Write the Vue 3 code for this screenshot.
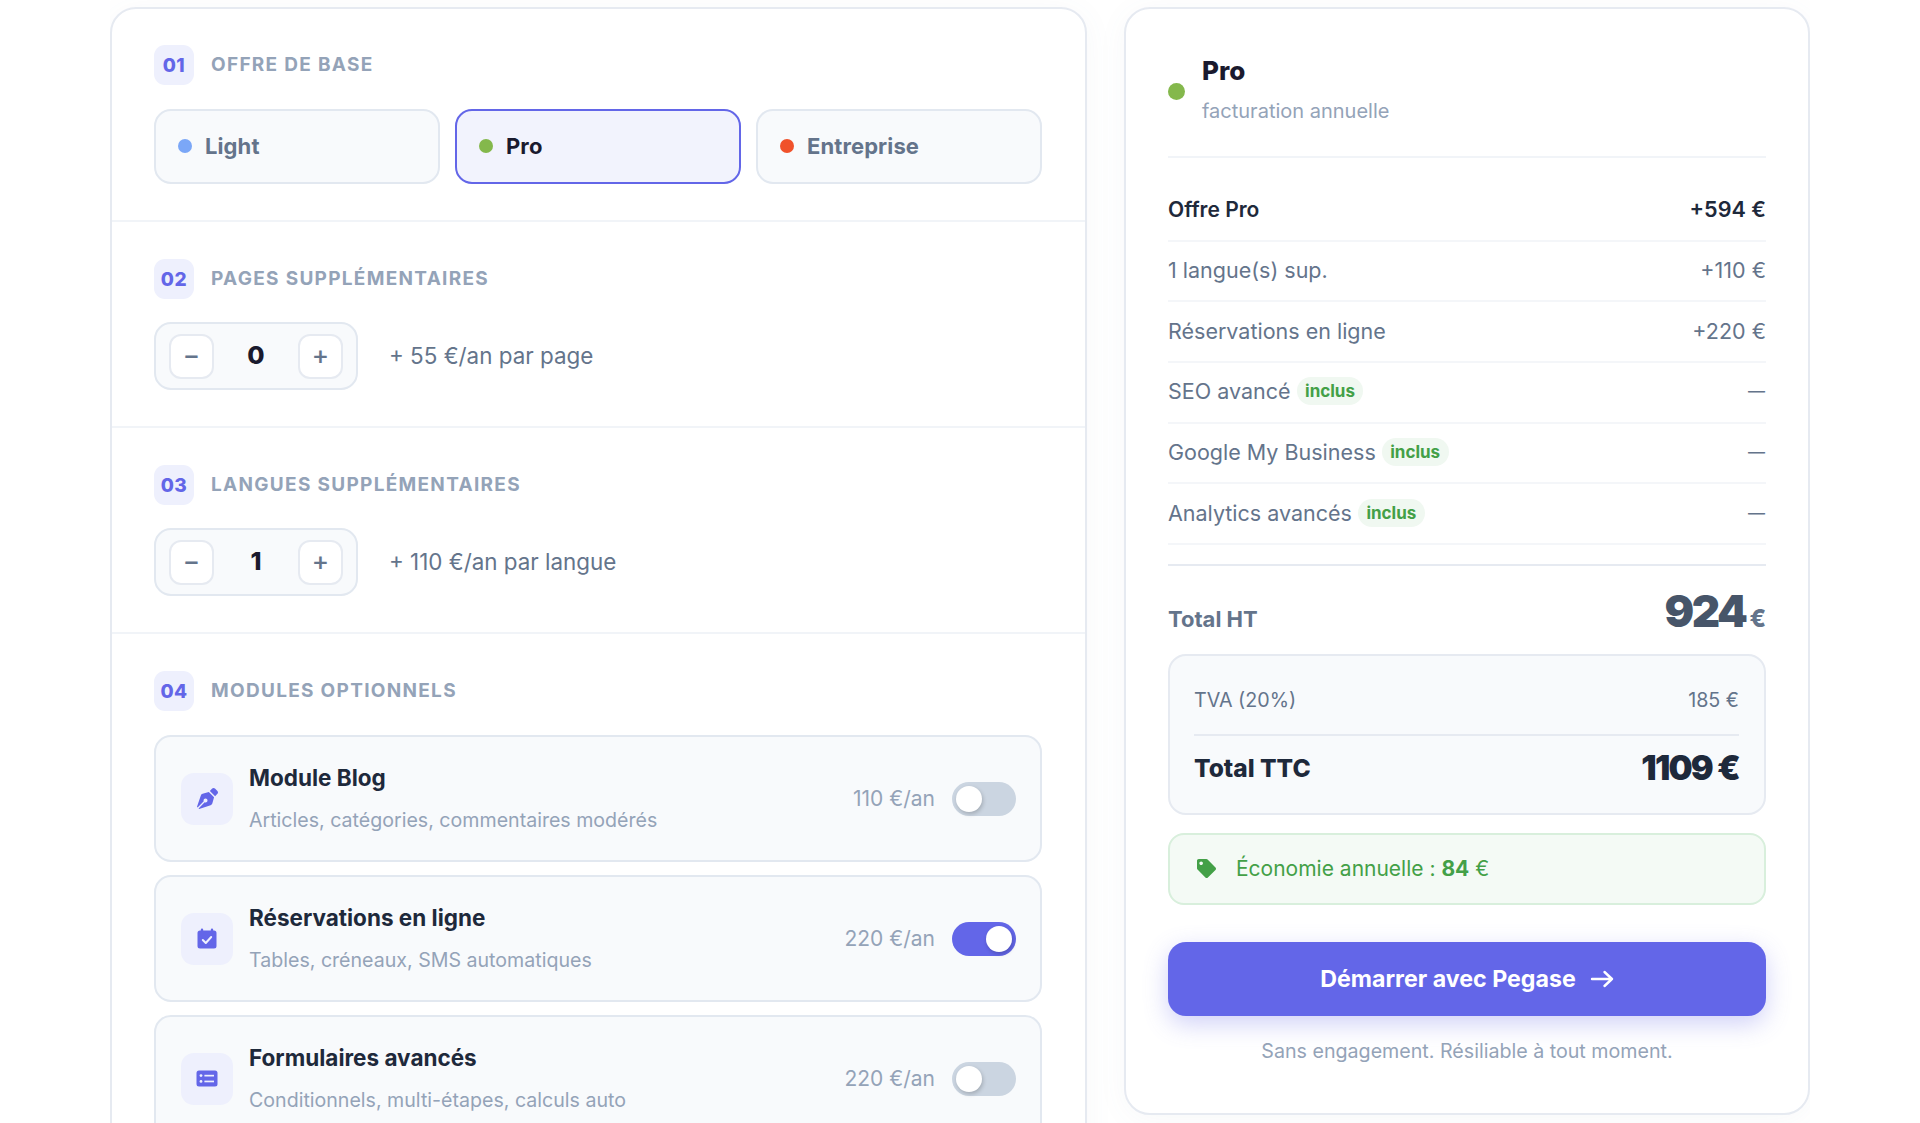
<script setup>
const plans = [
  { name: 'Light', color: '#7ba7f7', active: false },
  { name: 'Pro', color: '#84b84c', active: true },
  { name: 'Entreprise', color: '#f0522b', active: false }
]
const steppers = [
  { num: '02', title: 'PAGES SUPPLÉMENTAIRES', value: 0, hint: '+ 55 €/an par page' },
  { num: '03', title: 'LANGUES SUPPLÉMENTAIRES', value: 1, hint: '+ 110 €/an par langue' }
]
const modules = [
  { icon: 'pen', title: 'Module Blog', desc: 'Articles, catégories, commentaires modérés', price: '110 €/an', on: false },
  { icon: 'cal', title: 'Réservations en ligne', desc: 'Tables, créneaux, SMS automatiques', price: '220 €/an', on: true },
  { icon: 'form', title: 'Formulaires avancés', desc: 'Conditionnels, multi-étapes, calculs auto', price: '220 €/an', on: false }
]
const rows = [
  { label: 'Offre Pro', value: '+594 €', strong: true },
  { label: '1 langue(s) sup.', value: '+110 €' },
  { label: 'Réservations en ligne', value: '+220 €' },
  { label: 'SEO avancé', value: '—', badge: true },
  { label: 'Google My Business', value: '—', badge: true },
  { label: 'Analytics avancés', value: '—', badge: true }
]
</script>

<template>
  <div class="page">
    <main class="config">
      <section class="section first">
        <header class="sec-head"><span class="num">01</span><h2>OFFRE DE BASE</h2></header>
        <div class="plans">
          <div v-for="p in plans" :key="p.name" class="plan" :class="{ active: p.active }">
            <i class="dot" :style="{ background: p.color }"></i>{{ p.name }}
          </div>
        </div>
      </section>

      <section v-for="s in steppers" :key="s.num" class="section">
        <header class="sec-head"><span class="num">{{ s.num }}</span><h2>{{ s.title }}</h2></header>
        <div class="step-row">
          <div class="stepper">
            <span class="step-btn">−</span>
            <span class="step-val">{{ s.value }}</span>
            <span class="step-btn">+</span>
          </div>
          <span class="hint">{{ s.hint }}</span>
        </div>
      </section>

      <section class="section">
        <header class="sec-head wide"><span class="num">04</span><h2>MODULES OPTIONNELS</h2></header>
        <div class="modules">
          <article v-for="m in modules" :key="m.title" class="module">
            <span class="mod-icon">
              <svg v-if="m.icon === 'pen'" width="21" height="21" viewBox="0 0 512 512"><path fill="#6366e8" d="M136.6 138.79a64.003 64.003 0 0 0-43.31 41.35L0 460l14.69 14.69L164.8 324.58c-2.99-6.26-4.8-13.18-4.8-20.58 0-26.51 21.49-48 48-48s48 21.49 48 48-21.49 48-48 48c-7.4 0-14.32-1.81-20.58-4.8L37.31 497.31 52 512l279.86-93.29a64.003 64.003 0 0 0 41.35-43.31L416 224 288 96l-151.4 42.79zm361.34-64.62l-60.11-60.11c-18.75-18.75-49.16-18.75-67.91 0l-56.55 56.55 128.02 128.02 56.55-56.55c18.75-18.75 18.75-49.15 0-67.91z"/></svg>
              <svg v-else-if="m.icon === 'cal'" width="20" height="21" viewBox="0 0 20 21"><path fill="#6366e8" d="M5 0.5a1.2 1.2 0 0 1 1.2 1.2V2.5h7.6v-.8a1.2 1.2 0 0 1 2.4 0v.8H17a2.5 2.5 0 0 1 2.5 2.5v13a2.5 2.5 0 0 1-2.5 2.5H3A2.5 2.5 0 0 1 .5 18V5A2.5 2.5 0 0 1 3 2.5h.8v-.8A1.2 1.2 0 0 1 5 .5z"/><path fill="none" stroke="#eef0fd" stroke-width="2" stroke-linecap="round" stroke-linejoin="round" d="M5.8 12l3 3 5.4-6"/></svg>
              <svg v-else width="22" height="17" viewBox="0 0 22 17"><rect x="0.5" y="0.5" width="21" height="16" rx="2.5" fill="#6366e8"/><g fill="#eef0fd"><circle cx="5" cy="5.6" r="1.4"/><circle cx="5" cy="11.4" r="1.4"/><rect x="8.4" y="4.8" width="9.6" height="1.7"/><rect x="8.4" y="10.6" width="9.6" height="1.7"/></g></svg>
            </span>
            <div class="mod-text">
              <h3>{{ m.title }}</h3>
              <p>{{ m.desc }}</p>
            </div>
            <span class="mod-price">{{ m.price }}</span>
            <span class="toggle" :class="{ on: m.on }"><i></i></span>
          </article>
        </div>
      </section>
    </main>

    <aside class="summary">
      <div class="sum-head">
        <i class="sum-dot"></i>
        <div>
          <div class="sum-name">Pro</div>
          <div class="sum-sub">facturation annuelle</div>
        </div>
      </div>

      <ul class="lines">
        <li v-for="r in rows" :key="r.label" class="line" :class="{ strong: r.strong }">
          <span class="line-label">{{ r.label }}<em v-if="r.badge" class="inclus">inclus</em></span>
          <span class="line-val" :class="{ dash: r.badge }">{{ r.value }}</span>
        </li>
      </ul>

      <div class="total-ht">
        <span class="ht-label">Total HT</span>
        <span class="ht-val">924<small>€</small></span>
      </div>

      <div class="ttc-box">
        <div class="tva"><span>TVA (20%)</span><span>185 €</span></div>
        <div class="ttc"><span class="ttc-label">Total TTC</span><span class="ttc-val">1109 €</span></div>
      </div>

      <div class="eco">
        <svg width="19" height="19" viewBox="0 0 512 512"><path fill="#43a047" d="M0 252.118V48C0 21.49 21.49 0 48 0h204.118a48 48 0 0 1 33.941 14.059l211.882 211.882c18.745 18.745 18.745 49.137 0 67.882L293.823 497.941c-18.745 18.745-49.137 18.745-67.882 0L14.059 286.059A48 48 0 0 1 0 252.118zM112 64c-26.51 0-48 21.49-48 48s21.49 48 48 48 48-21.49 48-48-21.49-48-48-48z"/></svg>
        <span>Économie annuelle : <b>84</b> €</span>
      </div>

      <button class="cta" type="button">
        <span>Démarrer avec Pegase</span>
        <svg width="24" height="20" viewBox="0 0 24 20"><path fill="none" stroke="#fff" stroke-width="2.4" stroke-linecap="round" stroke-linejoin="round" d="M2 10h20M14.5 3l7.5 7-7.5 7"/></svg>
      </button>

      <p class="foot">Sans engagement. Résiliable à tout moment.</p>
    </aside>
  </div>
</template>

<style>
html, body { margin: 0; height: 100%; overflow: hidden; background: #fff; }
</style>

<style scoped>
* { box-sizing: border-box; }
.page {
  height: 1123px;
  overflow: hidden;
  width: 1700px;
  margin: 0 auto;
  padding-top: 7px;
  display: grid;
  grid-template-columns: 977px 686px;
  gap: 37px;
  align-items: start;
  font-family: Inter, "Liberation Sans", sans-serif;
  color: #1e293b;
}
.config, .summary {
  background: #fff;
  border: 2px solid #e6eaf1;
  border-radius: 26px;
  box-shadow: 0 4px 30px rgba(100, 116, 139, 0.05);
}
.section { padding: 37px 43px 36px 42px; border-bottom: 2px solid #f1f4f8; }
.section.first { padding-top: 36px; }
.section:last-child { border-bottom: 0; }
.sec-head { display: flex; align-items: center; gap: 17px; margin-bottom: 23px; }
.section.first .sec-head { margin-bottom: 24px; }
.sec-head.wide { margin-bottom: 24px; }
.num {
  width: 40px; height: 40px; border-radius: 11px;
  display: flex; align-items: center; justify-content: center;
  background: #eef0fd; color: #6366e8; font-size: 19px; font-weight: 800;
  letter-spacing: 0.5px;
}
h2 { margin: 0 0 1px; font-size: 19px; font-weight: 700; letter-spacing: 1.3px; color: #94a3b8; }
.plans { display: grid; grid-template-columns: repeat(3, 1fr); gap: 15px; }
.plan {
  height: 75px; border-radius: 17px; border: 2px solid #e2e8f0; background: #f8fafc;
  display: flex; align-items: center; gap: 13px; padding: 0 0 2px 22px;
  font-size: 22px; font-weight: 700; color: #64748b; letter-spacing: 0.1px;
}
.plan.active { border-color: #6366e8; background: #f2f3fd; color: #1a1a2e; }
.dot { width: 14px; height: 14px; border-radius: 50%; flex: none; }
.step-row { display: flex; align-items: center; gap: 31px; }
.stepper {
  width: 204px; height: 68px; border: 2px solid #e2e8f0; border-radius: 17px; background: #f8fafc;
  display: flex; align-items: center; padding: 0 13px;
}
.step-btn {
  width: 45px; height: 45px; border: 2px solid #e6eaf1; border-radius: 12px; background: #fff;
  display: flex; align-items: center; justify-content: center; padding-bottom: 3px;
  font-size: 26px; font-weight: 500; color: #64748b; flex: none;
}
.step-val { flex: 1; text-align: center; font-size: 25px; font-weight: 800; color: #1a1a2e; padding-bottom: 2px; }
.hint { font-size: 22.4px; color: #64748b; padding-bottom: 2px; }
.modules { display: flex; flex-direction: column; gap: 13px; }
.module {
  height: 127px; border: 2px solid #e2e8f0; border-radius: 17px; background: #f8fafc;
  display: flex; align-items: center; padding: 0 24px 0 25px;
}
.mod-icon {
  width: 52px; height: 52px; border-radius: 13px; background: #eef0fd; flex: none;
  display: flex; align-items: center; justify-content: center; margin-right: 16px;
}
.mod-text { flex: 1; min-width: 0; }
h3 { margin: 0 0 18px; font-size: 22.5px; line-height: 24px; font-weight: 700; color: #1e293b; }
.mod-text p { margin: 0; font-size: 19.6px; line-height: 24px; color: #94a3b8; }
.mod-price { font-size: 21px; color: #94a3b8; margin-right: 17px; }
.toggle { width: 64px; height: 34px; border-radius: 17px; background: #cbd5e1; position: relative; flex: none; }
.toggle i {
  position: absolute; top: 4px; left: 4px; width: 26px; height: 26px; border-radius: 50%;
  background: #fff; box-shadow: 1px 2px 4px rgba(0, 0, 0, 0.2);
}
.toggle.on { background: #6366e8; }
.toggle.on i { left: 34px; }

.summary { padding: 42px; height: 1108px; }
.sum-head {
  display: flex; align-items: center; gap: 17px;
  padding-bottom: 24px; border-bottom: 2px solid #f1f4f8;
}
.sum-dot { width: 17px; height: 17px; border-radius: 50%; background: #84b84c; flex: none; }
.sum-name { font-size: 26px; line-height: 40px; font-weight: 800; color: #1a1a2e; }
.sum-sub { font-size: 20px; line-height: 41px; color: #94a3b8; }
.lines { list-style: none; margin: 23px 0 19px; padding: 0; }
.line {
  height: 60.7px; padding-bottom: 2px; display: flex; align-items: center; justify-content: space-between;
  border-bottom: 2px solid #f4f6f9; font-size: 21.5px; color: #64748b;
}
.line.strong { color: #1e293b; font-weight: 600; font-size: 21px; }
.line.strong .line-val { font-size: 21.6px; }
.line-label { display: flex; align-items: center; }
.line-val.dash { font-size: 17px; font-weight: 500; padding-right: 1px; }
.inclus {
  margin-left: 6px; height: 28px; padding: 0 8.5px; border-radius: 14px;
  display: inline-flex; align-items: center; font-style: normal;
  background: #f0f8f1; color: #43a047; font-size: 17px; font-weight: 700;
}
.total-ht {
  display: flex; justify-content: space-between; align-items: baseline;
  border-top: 2px solid #e6eaf1; height: 90px; padding-top: 18px;
}
.ht-label { font-size: 22px; font-weight: 700; color: #64748b; }
.ht-val { font-size: 44px; font-weight: 900; color: #475569; letter-spacing: -2.5px; }
.ht-val small { font-size: 24px; font-weight: 800; color: #64748b; margin-left: 4px; letter-spacing: 0; }
.ttc-box {
  height: 161px; border: 2px solid #e6eaf1; border-radius: 18px; background: #f8fafc;
  padding: 0 25px 0 24px; margin-bottom: 18px;
}
.tva {
  height: 80px; display: flex; align-items: center; justify-content: space-between;
  border-bottom: 2px solid #e6eaf1; font-size: 19.7px; color: #64748b; padding-top: 9px;
}
.ttc { height: 63px; display: flex; align-items: center; justify-content: space-between; }
.ttc-label { font-size: 24.5px; font-weight: 800; color: #1e293b; }
.ttc-val { font-size: 34px; font-weight: 900; color: #1e293b; letter-spacing: -1.8px; }
.eco {
  height: 72px; border: 2px solid #d8efdc; border-radius: 16px; background: #f4faf5;
  display: flex; align-items: center; gap: 20px; padding: 0 0 2px 27px;
  font-size: 21px; color: #43a047;
}
.cta {
  width: 100%; height: 74px; margin-top: 37px; border: 0; border-radius: 18px;
  background: #6366e8; color: #fff; font-family: inherit; font-size: 23.2px; font-weight: 700;
  display: flex; align-items: center; justify-content: center; gap: 14px;
  box-shadow: 0 8px 24px rgba(99, 102, 232, 0.3);
}
.cta span { padding-bottom: 1px; }
.foot { margin: 23px 0 0; text-align: center; font-size: 19.65px; line-height: 24px; color: #94a3b8; }
</style>
